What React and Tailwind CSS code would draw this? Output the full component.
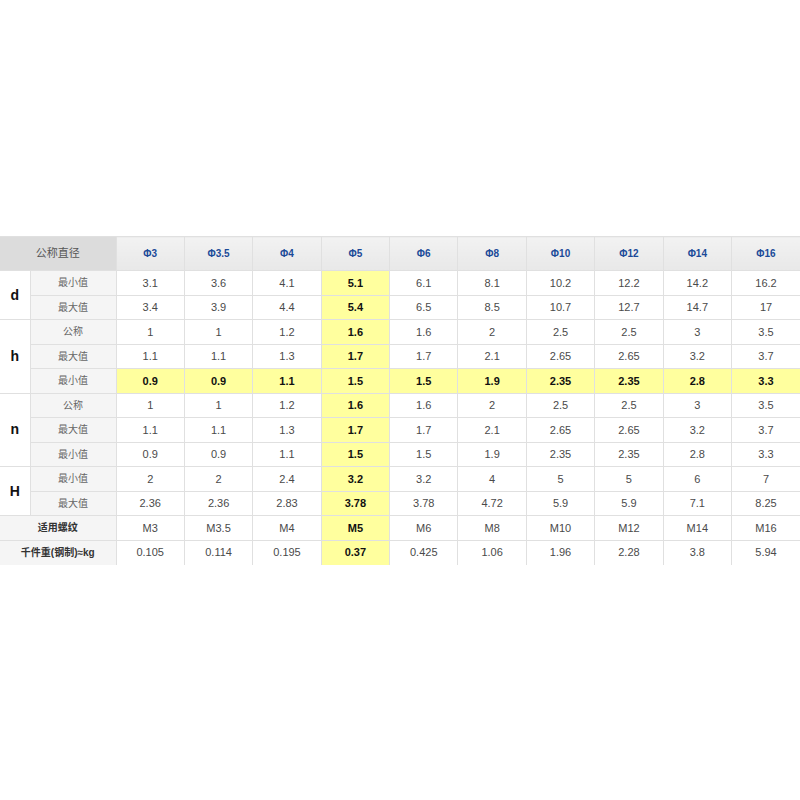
const cols = ['Φ3', 'Φ3.5', 'Φ4', 'Φ5', 'Φ6', 'Φ8', 'Φ10', 'Φ12', 'Φ14', 'Φ16']

const groups = [
    { key: 'd', rows: [
        { label: '最小值', values: ['3.1', '3.6', '4.1', '5.1', '6.1', '8.1', '10.2', '12.2', '14.2', '16.2'] },
        { label: '最大值', values: ['3.4', '3.9', '4.4', '5.4', '6.5', '8.5', '10.7', '12.7', '14.7', '17'] },
    ] },
    { key: 'h', rows: [
        { label: '公称', values: ['1', '1', '1.2', '1.6', '1.6', '2', '2.5', '2.5', '3', '3.5'] },
        { label: '最大值', values: ['1.1', '1.1', '1.3', '1.7', '1.7', '2.1', '2.65', '2.65', '3.2', '3.7'] },
        { label: '最小值', values: ['0.9', '0.9', '1.1', '1.5', '1.5', '1.9', '2.35', '2.35', '2.8', '3.3'], hl: true },
    ] },
    { key: 'n', rows: [
        { label: '公称', values: ['1', '1', '1.2', '1.6', '1.6', '2', '2.5', '2.5', '3', '3.5'] },
        { label: '最大值', values: ['1.1', '1.1', '1.3', '1.7', '1.7', '2.1', '2.65', '2.65', '3.2', '3.7'] },
        { label: '最小值', values: ['0.9', '0.9', '1.1', '1.5', '1.5', '1.9', '2.35', '2.35', '2.8', '3.3'] },
    ] },
    { key: 'H', rows: [
        { label: '最小值', values: ['2', '2', '2.4', '3.2', '3.2', '4', '5', '5', '6', '7'] },
        { label: '最大值', values: ['2.36', '2.36', '2.83', '3.78', '3.78', '4.72', '5.9', '5.9', '7.1', '8.25'] },
    ] },
]

const footer = [
    { label: '适用螺纹', values: ['M3', 'M3.5', 'M4', 'M5', 'M6', 'M8', 'M10', 'M12', 'M14', 'M16'] },
    { label: '千件重(钢制)≈kg', values: ['0.105', '0.114', '0.195', '0.37', '0.425', '1.06', '1.96', '2.28', '3.8', '5.94'] },
]

function Cell({ v, i, hl, last }) {
    const on = hl || i === 3
    return (
        <td className={`border border-[#e0e0e0] text-center text-[11px] ${last ? 'border-b-0' : ''} ${i === 9 ? 'border-r-0' : ''} ${on ? 'bg-[#ffff9e] font-bold text-[#111]' : 'bg-white text-[#4a4a4a]'}`}>
            {v}
        </td>
    )
}

export default function App() {
    return (
        <div className="w-[800px] h-[800px] bg-white pt-[236px]" style={{ fontFamily: '"Liberation Sans", "Noto Sans CJK SC", sans-serif' }}>
            <table className="w-[800px] table-fixed border-collapse">
                <colgroup>
                    <col className="w-[30px]" />
                    <col className="w-[86px]" />
                    {cols.map(c => <col key={c} />)}
                </colgroup>
                <tbody>
                    <tr className="h-[34px]">
                        <td colSpan={2} className="border border-l-0 border-[#e0e0e0] bg-[#dcdcdc] text-center text-[11px] text-[#555]">公称直径</td>
                        {cols.map((c, i) => (
                            <td key={c} className={`border border-[#e0e0e0] bg-gradient-to-b from-[#f2f2f2] to-[#e8e8e8] text-center text-[10px] font-bold text-[#1b4a98] ${i === 9 ? 'border-r-0' : ''}`}>{c}</td>
                        ))}
                    </tr>
                    {groups.map(g => g.rows.map((r, ri) => (
                        <tr key={g.key + ri} className="h-[24.5px]">
                            {ri === 0 && (
                                <td rowSpan={g.rows.length} className="border border-l-0 border-[#e0e0e0] bg-white text-center text-[14px] font-bold text-[#111]">{g.key}</td>
                            )}
                            <td className="border border-[#e0e0e0] bg-[#f5f5f5] text-center text-[10px] text-[#666]">{r.label}</td>
                            {r.values.map((v, i) => <Cell key={i} v={v} i={i} hl={r.hl} />)}
                        </tr>
                    )))}
                    {footer.map((r, fi) => (
                        <tr key={r.label} className="h-[24.5px]">
                            <td colSpan={2} className={`border border-l-0 border-[#e0e0e0] bg-[#f5f5f5] text-center text-[10px] font-bold text-[#333] ${fi === 1 ? 'border-b-0' : ''}`}>{r.label}</td>
                            {r.values.map((v, i) => <Cell key={i} v={v} i={i} last={fi === 1} />)}
                        </tr>
                    ))}
                </tbody>
            </table>
        </div>
    )
}
